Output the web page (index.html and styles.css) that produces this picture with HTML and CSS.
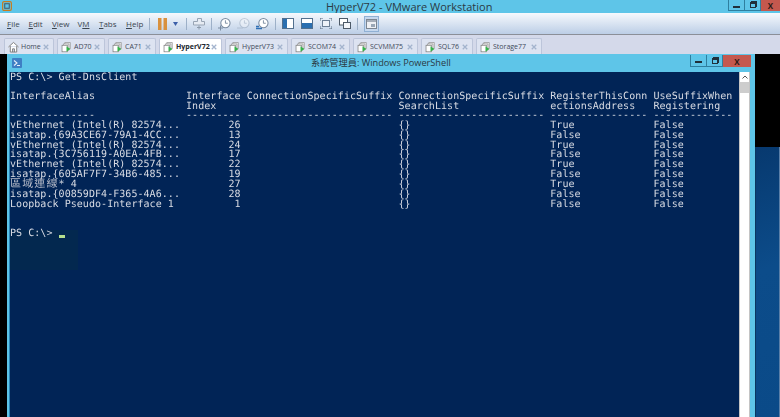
FILE: index.html
```html
<!DOCTYPE html>
<html lang="zh-Hant">
<head>
<meta charset="utf-8">
<title>HyperV72 - VMware Workstation</title>
<link rel="stylesheet" href="styles.css">
</head>
<body>
<svg class="defs" aria-hidden="true">
  <symbol id="vm" viewBox="0 0 16 16">
    <path d="M5.500 3.500V1.500h8v9h-2" fill="#f4f4f4" stroke="#8b8b8b"/>
    <path d="M3.500 5.500V3.500h8v9h-2" fill="#f4f4f4" stroke="#8b8b8b"/>
    <rect x="1.500" y="5.500" width="8" height="9.500" fill="#fff" stroke="#777"/>
    <path d="M8 7l5.500 4-5.500 4z" fill="#35b34a"/>
  </symbol>
  <symbol id="x" viewBox="0 0 8 8">
    <path d="M1 1l6 6M7 1L1 7" stroke="#a3b3cd" stroke-width="1.700" fill="none"/>
  </symbol>
  <symbol id="clock" viewBox="0 0 14 14">
    <circle cx="8" cy="6" r="5" fill="#fff" stroke="#7a8ba0" stroke-width="1.100"/>
    <path d="M8 3v3.200h2.500" fill="none" stroke="#7a8ba0"/>
  </symbol>
</svg>

<header class="titlebar">
  <svg class="app-icon" viewBox="0 0 11 11"><rect x=".7" y=".7" width="9.600" height="9.600" rx="1.500" fill="none" stroke="#c87b1e" stroke-width="1.300"/><rect x="3" y="3" width="5" height="5" fill="none" stroke="#45606f" stroke-width="1.200"/></svg>
  <span class="title">HyperV72 - VMware Workstation</span>
  <div class="controls">
    <span class="ctl ctl-min"><i class="min-glyph"></i></span>
    <span class="ctl ctl-max"><i class="max-glyph"></i></span>
    <span class="ctl ctl-close">X</span>
  </div>
</header>

<nav class="toolbar">
  <div class="menus">
    <span><u>F</u>ile</span><span><u>E</u>dit</span><span><u>V</u>iew</span><span>V<u>M</u></span><span><u>T</u>abs</span><span><u>H</u>elp</span>
  </div>
  <i class="sep sep-a"></i>
  <svg class="tool pause" viewBox="0 0 9 12"><path d="M0 0h3.500v12H0zM5.500 0H9v12H5.500z" fill="#d9913f"/></svg>
  <svg class="tool caret" viewBox="0 0 5 4"><path d="M0 0h5L2.500 4z" fill="#3c5fa8"/></svg>
  <i class="sep sep-b"></i>
  <svg class="tool send" viewBox="0 0 12 12"><path d="M4.500.5h4v3h3v3.500h-11V3.500h4z" fill="#e6ebf3" stroke="#98a4b4"/><path d="M6 7.500v4M4 9.500h4" stroke="#8c99aa"/></svg>
  <i class="sep sep-c"></i>
  <svg class="tool clock"><use href="#clock"/><path d="M0 11h5M2.500 8.500v5" stroke="#7a8ba0"/></svg>
  <svg class="tool clock clock-off"><use href="#clock"/><path d="M0 11h6" stroke="#7a8ba0"/></svg>
  <svg class="tool clock"><use href="#clock"/><path d="M0 11.500h6M0 9.500h3" stroke="#2f6fb5" stroke-width="1.300"/></svg>
  <i class="sep sep-d"></i>
  <svg class="tool view" viewBox="0 0 12 11"><rect x=".5" y=".5" width="11" height="10" fill="#fff" stroke="#53708e"/><rect x="1" y="1" width="4" height="9" fill="#2b6fb0"/></svg>
  <svg class="tool view" viewBox="0 0 12 11"><rect x=".5" y=".5" width="11" height="10" fill="#fff" stroke="#53708e"/><rect x="1" y="5" width="10" height="5" fill="#2b6fb0"/></svg>
  <svg class="tool view" viewBox="0 0 12 11"><rect x="2.500" y="2.500" width="7" height="6" fill="#eef2f8" stroke="#6d7f95"/><path d="M0 3V0h3M9 0h3v3M12 8v3H9M3 11H0V8" fill="none" stroke="#5b6d80"/></svg>
  <svg class="tool view" viewBox="0 0 12 11"><rect x=".5" y=".5" width="8" height="6.500" fill="#fff" stroke="#4d5a68"/><rect x="4.500" y="4.500" width="7" height="6" fill="#f4f6fa" stroke="#4d5a68"/></svg>
  <i class="sep sep-e"></i>
  <span class="toggle"><svg viewBox="0 0 11 10"><rect x=".5" y=".5" width="10" height="9" fill="#eef0f4" stroke="#7c8692"/><path d="M1 2h9" stroke="#8c97a5" stroke-width="1.500"/><rect x="5" y="5" width="4" height="3" fill="#9aa7b6"/></svg></span>
</nav>

<div class="tabs">
  <div class="tab tab-home"><svg class="tab-icon" viewBox="0 0 12 12"><path d="M.5 6L6 1l5.500 5M2.500 5v6.500h7V5M5 11.500V8h2v3.500" fill="#fff" stroke="#777"/></svg><span class="tab-label">Home</span><svg class="tab-x"><use href="#x"/></svg></div>
  <div class="tab tab-ad"><svg class="tab-icon"><use href="#vm"/></svg><span class="tab-label">AD70</span><svg class="tab-x"><use href="#x"/></svg></div>
  <div class="tab tab-ca"><svg class="tab-icon"><use href="#vm"/></svg><span class="tab-label">CA71</span><svg class="tab-x"><use href="#x"/></svg></div>
  <div class="tab tab-hv active"><svg class="tab-icon"><use href="#vm"/></svg><span class="tab-label">HyperV72</span><svg class="tab-x"><use href="#x"/></svg></div>
  <div class="tab tab-hv"><svg class="tab-icon"><use href="#vm"/></svg><span class="tab-label">HyperV73</span><svg class="tab-x"><use href="#x"/></svg></div>
  <div class="tab tab-scom"><svg class="tab-icon"><use href="#vm"/></svg><span class="tab-label">SCOM74</span><svg class="tab-x"><use href="#x"/></svg></div>
  <div class="tab tab-vmm"><svg class="tab-icon"><use href="#vm"/></svg><span class="tab-label">SCVMM75</span><svg class="tab-x"><use href="#x"/></svg></div>
  <div class="tab tab-sql"><svg class="tab-icon"><use href="#vm"/></svg><span class="tab-label">SQL76</span><svg class="tab-x"><use href="#x"/></svg></div>
  <div class="tab tab-sto"><svg class="tab-icon"><use href="#vm"/></svg><span class="tab-label">Storage77</span><svg class="tab-x"><use href="#x"/></svg></div>
</div>

<main class="guest">
  <div class="guest-left"></div>
  <section class="ps-window">
    <div class="ps-title">
      <svg class="ps-icon" viewBox="0 0 10 10"><rect width="10" height="10" rx="1" fill="#3f7fc4"/><path d="M2 2.500L5 5 2 7.500M5 7.500h3" fill="none" stroke="#e8f0fa" stroke-width="1.100"/></svg>
      <span class="ps-title-text">系統管理員: Windows PowerShell</span>
      <div class="ps-controls">
        <span class="ps-ctl ps-min"><i class="min-glyph"></i></span>
        <span class="ps-ctl ps-max"><i class="max-glyph"></i></span>
        <span class="ps-ctl ps-close">X</span>
      </div>
    </div>
    <div class="ps-body">
<pre class="console">PS C:\&gt; Get-DnsClient

InterfaceAlias               Interface ConnectionSpecificSuffix ConnectionSpecificSuffix RegisterThisConn UseSuffixWhen
                             Index                              SearchList               ectionsAddress   Registering
--------------               --------- ------------------------ ------------------------ ---------------- -------------
vEthernet (Intel(R) 82574...        26                          {}                       True             False
isatap.{69A3CE67-79A1-4CC...        13                          {}                       False            False
vEthernet (Intel(R) 82574...        24                          {}                       True             False
isatap.{3C756119-A0EA-4FB...        17                          {}                       False            False
vEthernet (Intel(R) 82574...        22                          {}                       True             False
isatap.{605AF7F7-34B6-485...        19                          {}                       False            False
<span class="cjk">區域連線</span>* 4                         27                          {}                       True             False
isatap.{00859DF4-F365-4A6...        28                          {}                       False            False
Loopback Pseudo-Interface 1          1                          {}                       False            False


PS C:\&gt; <span class="cursor"></span></pre>
      <div class="scrollbar">
        <span class="scroll-up"><svg viewBox="0 0 6 4"><path d="M.5 3.500L3 1l2.500 2.500" fill="none" stroke="#555"/></svg></span>
        <span class="scroll-thumb"></span>
      </div>
    </div>
  </section>
  <aside class="guest-right">
    <div class="black-block"></div>
    <div class="desktop"></div>
  </aside>
</main>
</body>
</html>
```
FILE: styles.css
```css
* { box-sizing: border-box; }
html, body { margin: 0; padding: 0; }
body {
  width: 780px;
  height: 417px;
  overflow: hidden;
  display: flex;
  flex-direction: column;
  background: #5ec5e8;
  font-family: "Open Sans", "Noto Sans", sans-serif;
}
.defs { width: 0; height: 0; position: absolute; }

.titlebar {
  height: 13px;
  flex: none;
  display: flex;
  align-items: flex-start;
  background: #5ec5e8;
  padding-left: 2px;
}
.app-icon { width: 10px; height: 10px; margin-top: 1px; flex: none; }
.title {
  margin-left: 314px;
  font-size: 11px;
  line-height: 13px;
  width: 140px;
  color: #2b3a44;
  white-space: nowrap;
}
.controls { margin-left: auto; display: flex; height: 11px; }
.ctl {
  display: flex;
  align-items: center;
  justify-content: center;
  height: 11px;
  border: 1px solid #2e7f9f;
  border-top: 0;
  font-size: 8px;
  font-weight: 700;
  color: #2a1a16;
}
.ctl-min { width: 17px; }
.ctl-max { width: 16px; border-left: 0; }
.ctl-close { width: 19px; border: 0; background: #c4584e; }
.min-glyph { display: block; width: 7px; height: 2px; background: #20303a; margin-top: 3px; }
.max-glyph { display: block; width: 6px; height: 6px; border: 1px solid #20303a; border-top-width: 2px; background: #5ec5e8; box-shadow: 1px -1px 0 #20303a; }

.toolbar {
  height: 22px;
  flex: none;
  display: flex;
  align-items: center;
  background: linear-gradient(#f6f9fd, #dfe8f4 40%, #bccee6);
  border-bottom: 1px solid #8b8f98;
  padding-left: 7px;
}
.menus { display: flex; width: 142px; font-size: 8px; line-height: 10px; color: #3c4650; }
.menus span:nth-child(1) { width: 21.500px; }
.menus span:nth-child(2) { width: 23.500px; }
.menus span:nth-child(3) { width: 25.500px; }
.menus span:nth-child(4) { width: 21.500px; }
.menus span:nth-child(5) { width: 27px; }
.sep { flex: none; width: 1px; height: 12px; background: #9db0c8; }
.tool { flex: none; display: block; }
.pause { width: 9px; height: 12px; margin-left: 8px; }
.caret { width: 5px; height: 4px; margin-left: 6px; }
.sep-b { margin-left: 8px; }
.send { width: 12px; height: 12px; margin-left: 6px; }
.sep-c { margin-left: 6px; }
.clock { width: 13px; height: 14px; }
.clock:nth-of-type(n) { margin-left: 6px; }
.clock-off { opacity: .35; }
.sep-d { margin-left: 6px; }
.view { width: 12px; height: 11px; margin-left: 7px; }
.sep-d + .view { margin-left: 6px; }
.sep-e { margin-left: 6px; }
.toggle {
  flex: none;
  display: flex;
  align-items: center;
  justify-content: center;
  width: 15px;
  height: 16px;
  margin-left: 6px;
  background: #c6d8ee;
  border: 1px solid #90b0d4;
}
.toggle svg { width: 11px; height: 10px; }

.tabs {
  height: 19px;
  flex: none;
  display: flex;
  align-items: flex-end;
  gap: 3px;
  background: #d4d9ea;
  padding-left: 4px;
}
.tab {
  height: 16px;
  display: flex;
  align-items: center;
  padding: 0 4px 0 3px;
  background: #dde3f1;
  border: 1px solid #bcc5da;
  border-bottom: 0;
  border-radius: 2px 2px 0 0;
  font-size: 7px;
  color: #3d4a5a;
}
.tab.active { background: #fff; font-weight: 700; color: #20262e; }
.tab-home { width: 50px; }
.tab-ad, .tab-ca { width: 48px; }
.tab-hv { width: 63px; }
.tab-scom { width: 59px; }
.tab-vmm { width: 65px; }
.tab-sql { width: 52px; }
.tab-sto { width: 66px; }
.tab-icon { width: 11px; height: 12px; flex: none; margin-right: 2px; }
.tab-label { white-space: nowrap; }
.tab-x { width: 6px; height: 6px; margin-left: auto; flex: none; }

.guest { flex: 1; min-height: 0; display: flex; }
.guest-left { width: 7px; flex: none; background: #000; }
.ps-window { width: 748px; flex: none; display: flex; flex-direction: column; background: #5ec5e8; }
.ps-title {
  height: 18px;
  flex: none;
  display: flex;
  align-items: flex-start;
  padding-left: 5px;
}
.ps-icon { width: 10px; height: 10px; margin-top: 4px; flex: none; }
.ps-title-text {
  margin-left: 289px;
  font-size: 9.200px;
  line-height: 18px;
  width: 139px;
  white-space: nowrap;
  color: #2b3a44;
  font-family: "Open Sans", "Noto Sans CJK TC", sans-serif;
}
.ps-controls { margin-left: auto; margin-right: 4px; display: flex; margin-top: 1px; height: 12px; }
.ps-ctl {
  display: flex;
  align-items: center;
  justify-content: center;
  height: 12px;
  border: 1px solid #2e7f9f;
  border-top: 0;
  font-size: 8px;
  font-weight: 700;
  color: #2a1a16;
}
.ps-min { width: 17px; }
.ps-max { width: 16px; border-left: 0; }
.ps-close { width: 28px; border: 0; background: #c4584e; }

.ps-body {
  flex: 1;
  min-height: 0;
  display: flex;
  margin: 0 5px 0 2px;
  background-color: #012456;
  border-left: 1px solid #2a86b8;
}
.console {
  flex: 1;
  min-width: 0;
  margin: 0;
  padding: .6px 0 0 0;
  overflow: hidden;
  font-family: "DejaVu Sans Mono", monospace;
  font-size: 10px;
  letter-spacing: .05px;
  line-height: 9.700px;
  text-rendering: geometricPrecision;
  color: #d9dce4;
  background:
    linear-gradient(#03284f, #03284f) 0 158px / 68px 40px no-repeat;
  filter: blur(.25px);
}
.cjk {
  font-family: "Noto Sans CJK TC", sans-serif;
  font-size: 11px;
  letter-spacing: 1.140px;
  color: #b8bdca;
}
.cursor {
  display: inline-block;
  width: 6px;
  height: 3px;
  vertical-align: -2px;
  background: #b6e08e;
}
.scrollbar {
  width: 11px;
  flex: none;
  display: flex;
  flex-direction: column;
  background: #fff;
  border: solid #c4c4c4;
  border-width: 0 1px;
}
.scroll-up { height: 10px; display: flex; align-items: center; justify-content: center; }
.scroll-up svg { width: 6px; height: 4px; }
.scroll-thumb { height: 11px; background: #cdcdcd; }

.guest-right { flex: 1; display: flex; flex-direction: column; }
.black-block { height: 93px; flex: none; background: #000; }
.desktop { flex: 1; background: linear-gradient(160deg, #07396f, #0c4c8a 45%, #0a4a88); border-left: 1px solid #0a3660; border-right: 1px solid #5a7fa8; }
```
